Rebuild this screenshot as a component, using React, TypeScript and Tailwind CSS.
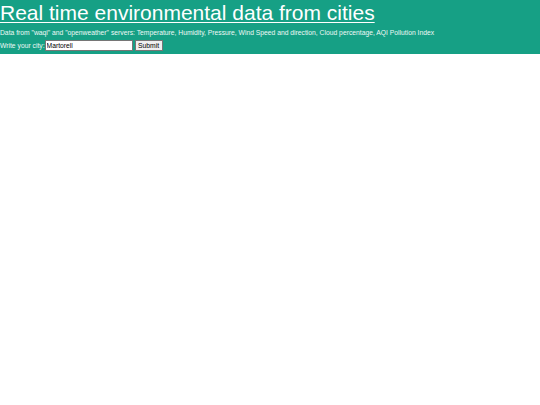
export default function App() {
  return (
    <div className="min-h-screen bg-white" style={{ fontFamily: '"Liberation Sans", Arial, sans-serif' }}>
      <div className="bg-[#16a085] pb-[3px] text-white">
        <h1 className="m-0 text-[21px] leading-[26px] font-normal underline decoration-1 underline-offset-2">
          Real time environmental data from cities
        </h1>
        <p className="mt-[2px] text-[6.75px] leading-[9px] text-[#eef9f6]">
          Data from "waqi" and "openweather" servers: Temperature, Humidity, Pressure, Wind Speed and direction, Cloud percentage, AQI Pollution Index
        </p>
        <form className="mt-[3px] flex items-center text-[6.75px] leading-[9px]" onSubmit={(e) => e.preventDefault()}>
          <span className="text-[#eef9f6]">Write your city:</span>
          <input
            defaultValue="Martorell"
            className="h-[11px] w-[88px] border border-[#767676] bg-white px-[1px] text-[6.75px] text-black"
          />
          <button className="ml-[2px] h-[11px] w-[28px] border border-[#767676] bg-[#efefef] text-[6.75px] leading-[8px] text-black">
            Submit
          </button>
        </form>
      </div>
    </div>
  );
}
